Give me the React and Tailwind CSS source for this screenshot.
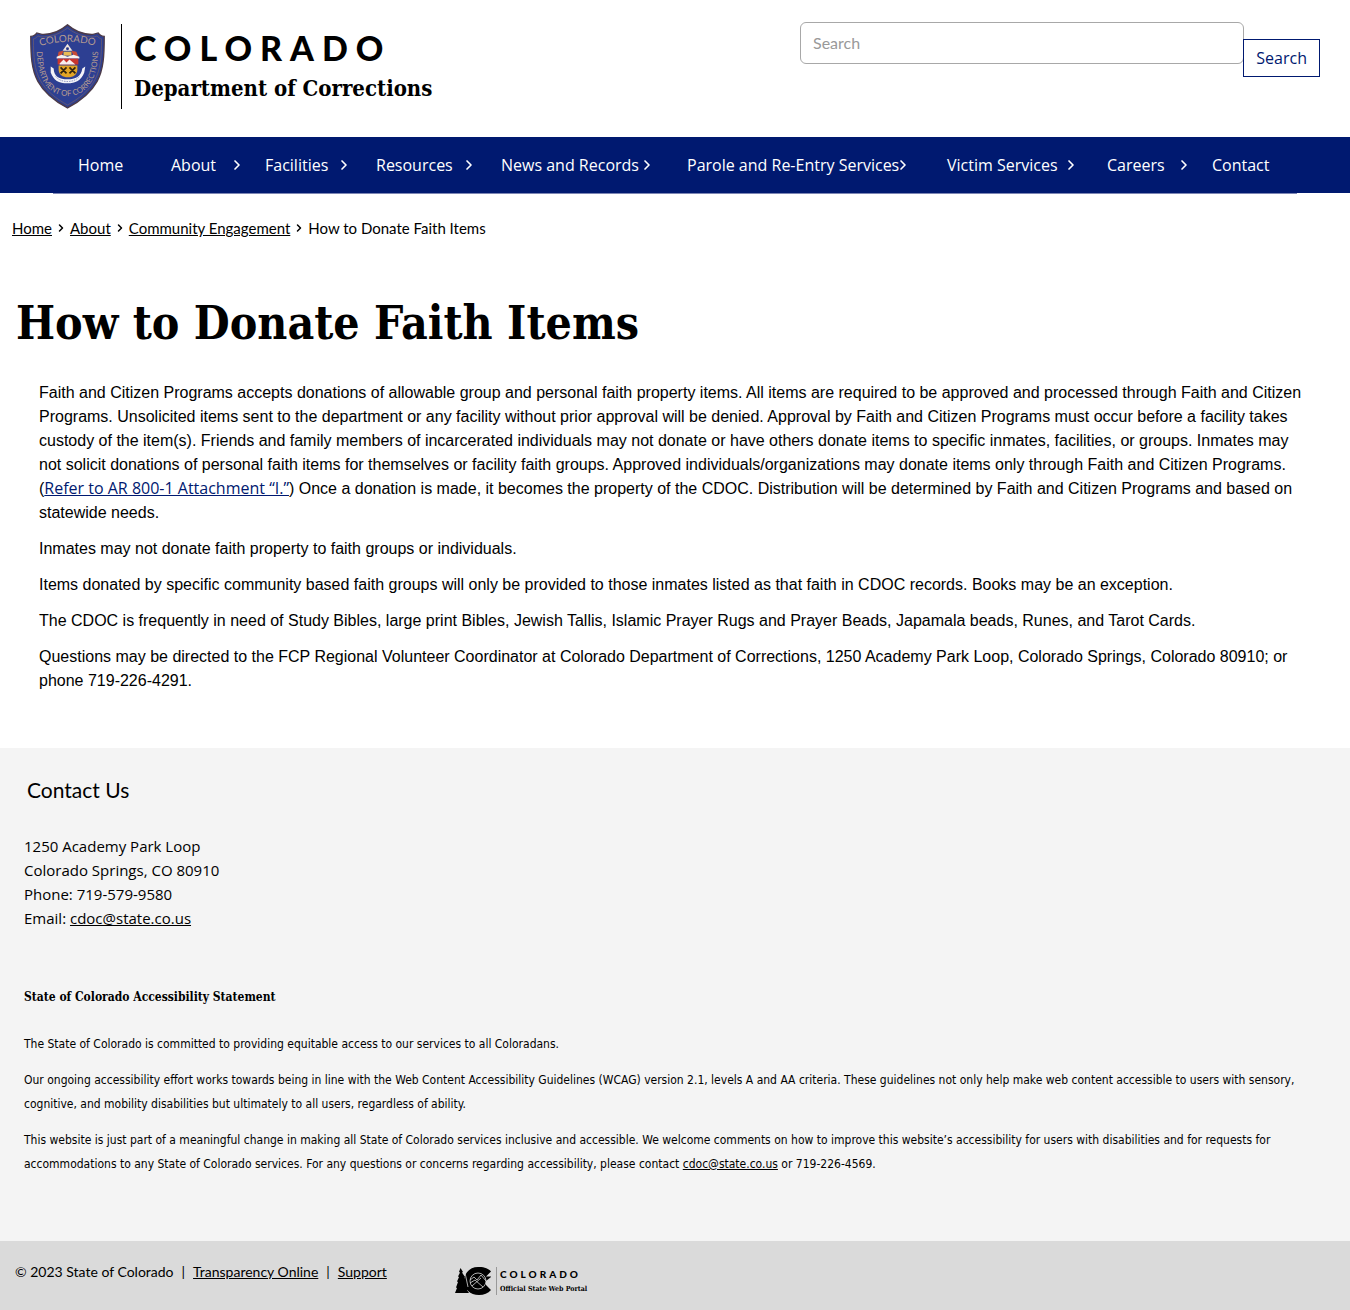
import React from 'react';
import { ChevronRight } from 'lucide-react';

const NAV_ITEMS = [
  { label: 'Home', pad: '' },
  { label: 'About', pad: 'pr-5', menu: true },
  { label: 'Facilities', pad: 'pr-6', menu: true },
  { label: 'Resources', pad: 'pr-6', menu: true },
  { label: 'News and Records', pad: 'pr-8', menu: true },
  { label: 'Parole and Re-Entry Services', pad: 'pr-9', menu: true },
  { label: 'Victim Services', pad: 'pr-7', menu: true },
  { label: 'Careers', pad: 'pr-5', menu: true },
  { label: 'Contact', pad: '' },
];

const CRUMBS = ['Home', 'About', 'Community Engagement'];

function Shield() {
  return (
    <svg viewBox="0 0 76 86" className="h-[85px] w-[75px] shrink-0" role="img" aria-label="Colorado Department of Corrections badge">
      <defs>
        <path id="badge-top" d="M11 22 Q38 14 65 22" />
        <path id="badge-rim" d="M7 20 C6 50 14 72 38 73 C62 72 70 50 69 20" />
      </defs>
      <path
        d="M38 .8 C32 6 22 11 12 10.500 L7 9 C5.500 11.500 3 12.500 .8 12.500 C.8 32 1.500 46 8 58 C14 69 25 78 38 85 C51 78 62 69 68 58 C74.500 46 75.200 32 75.200 12.500 C73 12.500 70.500 11.500 69 9 L64 10.500 C54 11 44 6 38 .8Z"
        fill="#2d3f92" stroke="#4c3b49" strokeWidth="1.400"
      />
      <path
        d="M38 4 C31 9.500 22 13.500 11 13 L8 12 C6.500 14 5 14.800 3.500 15 C3.500 34 4.500 46 10.500 57 C16 67 26 75.500 38 82 C50 75.500 60 67 65.500 57 C71.500 46 72.500 34 72.500 15 C71 14.800 69.500 14 68 12 L65 13 C54 13.500 45 9.500 38 4Z"
        fill="none" stroke="#7d6562" strokeWidth=".6"
      />
      <text fill="#b39a90" fontSize="10" fontFamily="Lato, sans-serif" textAnchor="middle">
        <textPath href="#badge-top" startOffset="50%">COLORADO</textPath>
      </text>
      <text fill="#b39a90" fontSize="8" fontFamily="Lato, sans-serif" textAnchor="middle">
        <textPath href="#badge-rim" startOffset="50%">DEPARTMENT OF CORRECTIONS</textPath>
      </text>
      <path d="M38 20 L43 27 H33Z" fill="#f1e6dc" />
      <circle cx="38" cy="25" r="1.500" fill="#27378a" />
      <path d="M29 28 L34 27 L32 32 L28 33Z M42 27 L47 28 L49 33 L44 32Z" fill="#c84a35" />
      <path d="M34 28 H42 V32 H34Z" fill="#e9bb54" />
      <path d="M27 33 L32 31 L38 33 L44 31 L50 33 V35 H27Z" fill="#f5f2ef" />
      <path d="M28 35 H49 V41 H28Z" fill="#c8352e" />
      <path d="M30 40 L34 36 L37 39 L40 36 L46 41 H30Z" fill="#f7eeee" />
      <path d="M29 42 H48 V46 C48 51 44 54 38.500 54 C33 54 29 51 29 46Z" fill="#e3a526" />
      <path d="M31 44 L37 50 M37 44 L31 50 M40 44 L46 50 M46 44 L40 50" stroke="#33240f" strokeWidth="1.800" />
      <path d="M21 43 L24 45 C24 53 30 56 38 56 C46 56 52 53 53 45 L56 43 L55 49 C52 57 46 60 38 60 C29 60 24 57 21 49Z" fill="#f3f3f8" />
      <path d="M26 53 C31 60 45 60 50 53" fill="none" stroke="#6873ae" strokeWidth=".7" strokeDasharray="1.500 1" />
    </svg>
  );
}

function PortalLogo() {
  return (
    <svg viewBox="0 0 136 30" className="h-[30px] w-[136px]" role="img" aria-label="Colorado Official State Web Portal">
      <path d="M5.500 2 L8 6 L7 6.500 L10 11 L9 11.500 L12 17 L11 17.500 L14 22 L12 24 L14 27 H0 L2 22 L1 21.500 L3 16 L2 15.500 L4 11 L3 10.500 L5 6.500 L4 6Z" />
      <path d="M23 1 C28 .5 34 2.500 36 5.500 L31 10.500 H36 V11 L31 15 L31 19 L36 24 C33 27.500 29 29 24 29 C15 29 9 23 9 15 C9 7 15 1 23 1Z" />
      <circle cx="23" cy="15" r="8" fill="#000" stroke="#dadada" strokeWidth=".8" />
      <path d="M15 14 L19 11 L22 14 L26 9 L31 15 M15 17 L20 14 L28 21 M17 20 L26 12 M9 2 L13 21" fill="none" stroke="#dadada" strokeWidth=".8" />
      <path d="M41.500 1 V29" stroke="#999" strokeWidth="1" />
      <text x="45" y="12" fontFamily="Lato, sans-serif" fontWeight="900" fontSize="10" letterSpacing="3">COLORADO</text>
      <text x="45" y="25" fontFamily="'DejaVu Serif Condensed', 'DejaVu Serif', serif" fontWeight="700" fontSize="7">Official State Web Portal</text>
    </svg>
  );
}

export default function App() {
  return (
    <div className="bg-white font-['Open_Sans',sans-serif] text-base text-black">
      <header className="flex justify-between px-[30px] pt-6 pb-7">
        <a href="#" className="flex shrink-0 gap-4">
          <Shield />
          <span className="w-px bg-black" />
          <span className="-ml-1 flex flex-col pt-2">
            <span className="font-['Lato',sans-serif] text-[34px] leading-8 font-black tracking-[8px]">COLORADO</span>
            <span className="mt-2 font-['DejaVu_Serif_Condensed','DejaVu_Serif',serif] text-[22px] leading-8 font-bold whitespace-nowrap">Department of Corrections</span>
          </span>
        </a>
        <form className="-mt-0.5 flex w-[520px] items-start" onSubmit={(e) => e.preventDefault()}>
          <input
            type="search"
            aria-label="Search"
            placeholder="Search"
            className="h-[42px] min-w-0 flex-1 rounded-md border border-[#a8a8a8] px-3 pb-0.5 font-['Lato',sans-serif] placeholder:text-[#999]"
          />
          <button className="mt-[17px] -ml-px h-[38px] border border-[#001970] bg-white px-3 font-['Open_Sans',sans-serif] text-[#001970]">Search</button>
        </form>
      </header>

      <nav className="bg-[#001970] text-white" aria-label="Main">
        <ul className="mx-[78px] grid h-14 grid-cols-[93fr_94fr_111fr_125fr_186fr_260fr_160fr_105fr_60fr] items-center">
          {NAV_ITEMS.map((item) => (
            <li key={item.label} className="min-w-0">
              <a href="#" className={`flex items-center justify-between whitespace-nowrap ${item.pad}`}>
                {item.label}
                {item.menu && <ChevronRight className="-ml-1 size-4 shrink-0" strokeWidth={2.5} aria-hidden="true" />}
              </a>
            </li>
          ))}
        </ul>
      </nav>
      <div className="mx-[53px] h-px bg-[#7d86b4]" />

      <main className="px-3 pb-[55px]">
        <nav aria-label="Breadcrumb" className="pt-[22px] font-['Lato',sans-serif] text-[15px] leading-6">
          <ol className="flex">
            {CRUMBS.map((c) => (
              <li key={c} className="flex items-center">
                <a href="#" className="underline">{c}</a>
                <ChevronRight className="mx-[3px] size-3" strokeWidth={3} aria-hidden="true" />
              </li>
            ))}
            <li>How to Donate Faith Items</li>
          </ol>
        </nav>
        <h1 className="mt-[49px] pl-1 font-['DejaVu_Serif_Condensed','DejaVu_Serif',serif] text-[46px] leading-[68px] font-bold">How to Donate Faith Items</h1>
        <div className="mt-6 space-y-3 px-[27px] font-['Liberation_Sans',sans-serif] leading-6">
          <p>
            Faith and Citizen Programs accepts donations of allowable group and personal faith property items. All items are required to be approved and processed through Faith and Citizen Programs. Unsolicited items sent to the department or any facility without prior approval will be denied. Approval by Faith and Citizen Programs must occur before a facility takes custody of the item(s). Friends and family members of incarcerated individuals may not donate or have others donate items to specific inmates, facilities, or groups. Inmates may not solicit donations of personal faith items for themselves or facility faith groups. Approved individuals/organizations may donate items only through Faith and Citizen Programs. (<a href="#" className="font-['Open_Sans',sans-serif] leading-none text-[#001970] underline">Refer to AR 800-1 Attachment “I.”</a>) Once a donation is made, it becomes the property of the CDOC. Distribution will be determined by Faith and Citizen Programs and based on statewide needs.
          </p>
          <p>Inmates may not donate faith property to faith groups or individuals.</p>
          <p>Items donated by specific community based faith groups will only be provided to those inmates listed as that faith in CDOC records. Books may be an exception.</p>
          <p>The CDOC is frequently in need of Study Bibles, large print Bibles, Jewish Tallis, Islamic Prayer Rugs and Prayer Beads, Japamala beads, Runes, and Tarot Cards.</p>
          <p>Questions may be directed to the FCP Regional Volunteer Coordinator at Colorado Department of Corrections, 1250 Academy Park Loop, Colorado Springs, Colorado 80910; or phone 719-226-4291.</p>
        </div>
      </main>

      <footer>
        <div className="bg-[#f4f4f4] px-6 pt-[26px] pb-[65px]">
          <h2 className="pl-[3px] font-['Lato',sans-serif] text-[21px] leading-8">Contact Us</h2>
          <address className="mt-7 text-[15px] leading-6 not-italic">
            <p>1250 Academy Park Loop</p>
            <p>Colorado Springs, CO 80910</p>
            <p>Phone: 719-579-9580</p>
            <p>Email: <a href="#" className="underline">cdoc@state.co.us</a></p>
          </address>
          <h3 className="mt-[55px] font-['DejaVu_Serif_Condensed','DejaVu_Serif',serif] text-xs leading-6 font-bold">State of Colorado Accessibility Statement</h3>
          <div className="mt-[23px] space-y-3 pr-4 font-['DejaVu_Sans_Condensed','DejaVu_Sans',sans-serif] text-xs leading-6">
            <p>The State of Colorado is committed to providing equitable access to our services to all Coloradans.</p>
            <p>Our ongoing accessibility effort works towards being in line with the Web Content Accessibility Guidelines (WCAG) version 2.1, levels A and AA criteria. These guidelines not only help make web content accessible to users with sensory, cognitive, and mobility disabilities but ultimately to all users, regardless of ability.</p>
            <p>This website is just part of a meaningful change in making all State of Colorado services inclusive and accessible. We welcome comments on how to improve this website’s accessibility for users with disabilities and for requests for accommodations to any State of Colorado services. For any questions or concerns regarding accessibility, please contact <a href="#" className="underline">cdoc@state.co.us</a> or 719-226-4569.</p>
          </div>
        </div>
        <div className="flex items-start gap-[68px] bg-[#dadada] px-[15px] pt-[19px] pb-[14px]">
          <p className="flex gap-2 font-['Lato',sans-serif] text-sm leading-6">
            <span>© 2023 State of Colorado</span>
            <span>|</span>
            <a href="#" className="underline">Transparency Online</a>
            <span>|</span>
            <a href="#" className="underline">Support</a>
          </p>
          <a href="#" className="mt-1.5"><PortalLogo /></a>
        </div>
      </footer>
    </div>
  );
}
